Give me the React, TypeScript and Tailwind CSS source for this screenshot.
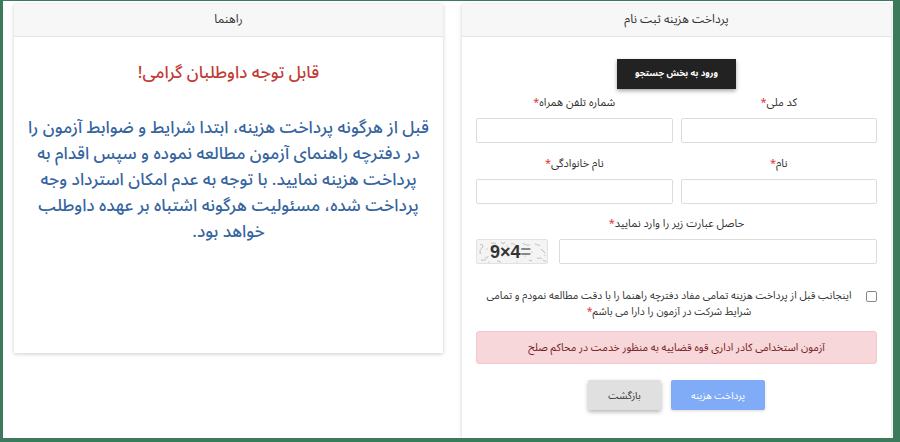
const font = { fontFamily: '"Noto Sans Arabic", "Noto Naskh Arabic", "DejaVu Sans", sans-serif' };

function Label({ text }: { text: string }) {
  return (
    <div className="mb-[6px] h-[18px] text-center text-[11px] leading-[18px] text-[#333]">
      {text}
      <span className="text-[#e0353b]">*</span>
    </div>
  );
}

function Input() {
  return <input className="h-[25px] w-full rounded-[2px] border border-[#dcdcdc] bg-white outline-none" />;
}

function Captcha() {
  return (
    <div dir="ltr" className="relative h-[25px] w-[72px] shrink-0 overflow-hidden rounded-[2px] border border-[#e2e2e2] bg-[#f4f4f4]">
      <svg className="absolute inset-0" width="72" height="25" viewBox="0 0 72 25">
        <g fill="none" stroke="#9a9a9a" strokeWidth="0.6">
          <path d="M3 5c2-2 4 1 2 3s-3 2-1 4" />
          <path d="M8 17c1 2 3 1 3-1" />
          <path d="M4 20c2 1 3-1 5 0" />
          <path d="M14 3c2 1 3-1 5 1" />
          <path d="M24 2c1 2 3 2 4 0" />
          <path d="M34 4c2-1 3 1 4 0" />
          <path d="M46 3c1 2 2 1 4 2s2-1 3 0" />
          <path d="M58 4c2 0 3 2 5 1" />
          <path d="M64 9c1 2 3 2 4 4" />
          <path d="M60 18c2 1 3-1 5 1" />
          <path d="M52 20c1 1 2 0 3 1" />
          <path d="M66 20c1 1 2 0 3 2" />
          <path d="M2 12c1 1 2 0 2 2" />
          <path d="M20 21c2 0 2 1 4 1" />
        </g>
        <g fill="#b0b0b0">
          <circle cx="10" cy="9" r="0.6" />
          <circle cx="18" cy="8" r="0.6" />
          <circle cx="30" cy="6" r="0.6" />
          <circle cx="42" cy="8" r="0.6" />
          <circle cx="55" cy="12" r="0.6" />
          <circle cx="68" cy="15" r="0.6" />
          <circle cx="12" cy="22" r="0.6" />
          <circle cx="40" cy="22" r="0.6" />
          <circle cx="48" cy="16" r="0.6" />
        </g>
      </svg>
      <span className="absolute left-[13px] top-[1px] text-[18px] font-bold leading-[22px] text-[#333]" style={{ fontFamily: '"Liberation Sans", sans-serif' }}>
        9×4<span className="text-[#888]">=</span>
      </span>
    </div>
  );
}

export default function App() {
  return (
    <div className="h-[442px] w-[900px] overflow-hidden bg-[#3b7a5a] pb-[4px] pl-[3px] pr-[7px] pt-[1px]" style={font}>
      <div className="flex h-full gap-[19px] overflow-hidden bg-white pl-[11px] pr-[2px] pt-[3px]">
        {/* guide card */}
        <div dir="rtl" className="w-[429px] self-start bg-white shadow-[0_1px_4px_rgba(0,0,0,0.2)]">
          <div className="flex h-[33px] items-center justify-center border-b border-[#e6e6e6] bg-[#f7f7f7] text-[12px] text-[#333]">
            راهنما
          </div>
          <div className="px-[10px] pb-[108px] pt-[23px] text-center">
            <div className="text-[17px] font-medium leading-[26px] text-[#c13b35]">قابل توجه داوطلبان گرامی!</div>
            <p className="mt-[29px] whitespace-nowrap text-[17px] font-medium leading-[26px] text-[#35649f]">
              قبل از هرگونه پرداخت هزینه، ابتدا شرایط و ضوابط آزمون را
              <br />
              در دفترچه راهنمای آزمون مطالعه نموده و سپس اقدام به
              <br />
              پرداخت هزینه نمایید. با توجه به عدم امکان استرداد وجه
              <br />
              پرداخت شده، مسئولیت هرگونه اشتباه بر عهده داوطلب
              <br />
              خواهد بود.
            </p>
          </div>
        </div>

        {/* payment card */}
        <div dir="rtl" className="w-[429px] shrink-0 bg-white shadow-[0_1px_4px_rgba(0,0,0,0.2)]">
          <div className="flex h-[33px] items-center justify-center border-b border-[#e6e6e6] bg-[#f7f7f7] text-[12px] text-[#333]">
            پرداخت هزینه ثبت نام
          </div>
          <div className="px-[14px] pb-[40px] pt-[22px]">
            <div className="flex justify-center">
              <button className="h-[30px] w-[119px] bg-[#222] text-[9px] font-bold text-white shadow-[0_2px_4px_rgba(0,0,0,0.35)]">
                ورود به بخش جستجو
              </button>
            </div>

            <div className="mt-[5px] grid grid-cols-2 gap-x-[8px]">
              <div>
                <Label text="کد ملی" />
                <Input />
              </div>
              <div>
                <Label text="شماره تلفن همراه" />
                <Input />
              </div>
              <div className="mt-[12px]">
                <Label text="نام" />
                <Input />
              </div>
              <div className="mt-[12px]">
                <Label text="نام خانوادگی" />
                <Input />
              </div>
            </div>

            <div className="mt-[11px]">
              <Label text="حاصل عبارت زیر را وارد نمایید" />
              <div className="flex gap-[11px]">
                <Input />
                <Captcha />
              </div>
            </div>

            <div className="mt-[24px] flex items-start gap-[4px]">
              <span className="mt-[3px] h-[11px] w-[11px] shrink-0 rounded-[2px] border border-[#888] bg-white" />
              <div className="flex-1 whitespace-nowrap text-center text-[10.5px] leading-[16px] text-[#333]">
                اینجانب قبل از پرداخت هزینه تمامی مفاد دفترچه راهنما را با دقت مطالعه نمودم و تمامی
                <br />
                شرایط شرکت در آزمون را دارا می باشم<span className="text-[#e0353b]">*</span>
              </div>
            </div>

            <div className="mt-[11px] flex h-[33px] items-center justify-center rounded-[3px] border border-[#f5c6cb] bg-[#f8d7da] text-[10.6px] text-[#721c24]">
              آزمون استخدامی کادر اداری قوه قضاییه به منظور خدمت در محاکم صلح
            </div>

            <div className="mt-[16px] flex justify-center gap-[10px]">
              <button className="h-[30px] w-[94px] rounded-[2px] bg-[#80abf7] text-[10px] text-white shadow-[0_1px_3px_rgba(0,0,0,0.15)]">
                پرداخت هزینه
              </button>
              <button className="h-[30px] w-[73px] rounded-[2px] bg-[#e0e0e0] text-[10px] text-[#333] shadow-[0_2px_4px_rgba(0,0,0,0.3)]">
                بازگشت
              </button>
            </div>
          </div>
        </div>
      </div>
    </div>
  );
}
